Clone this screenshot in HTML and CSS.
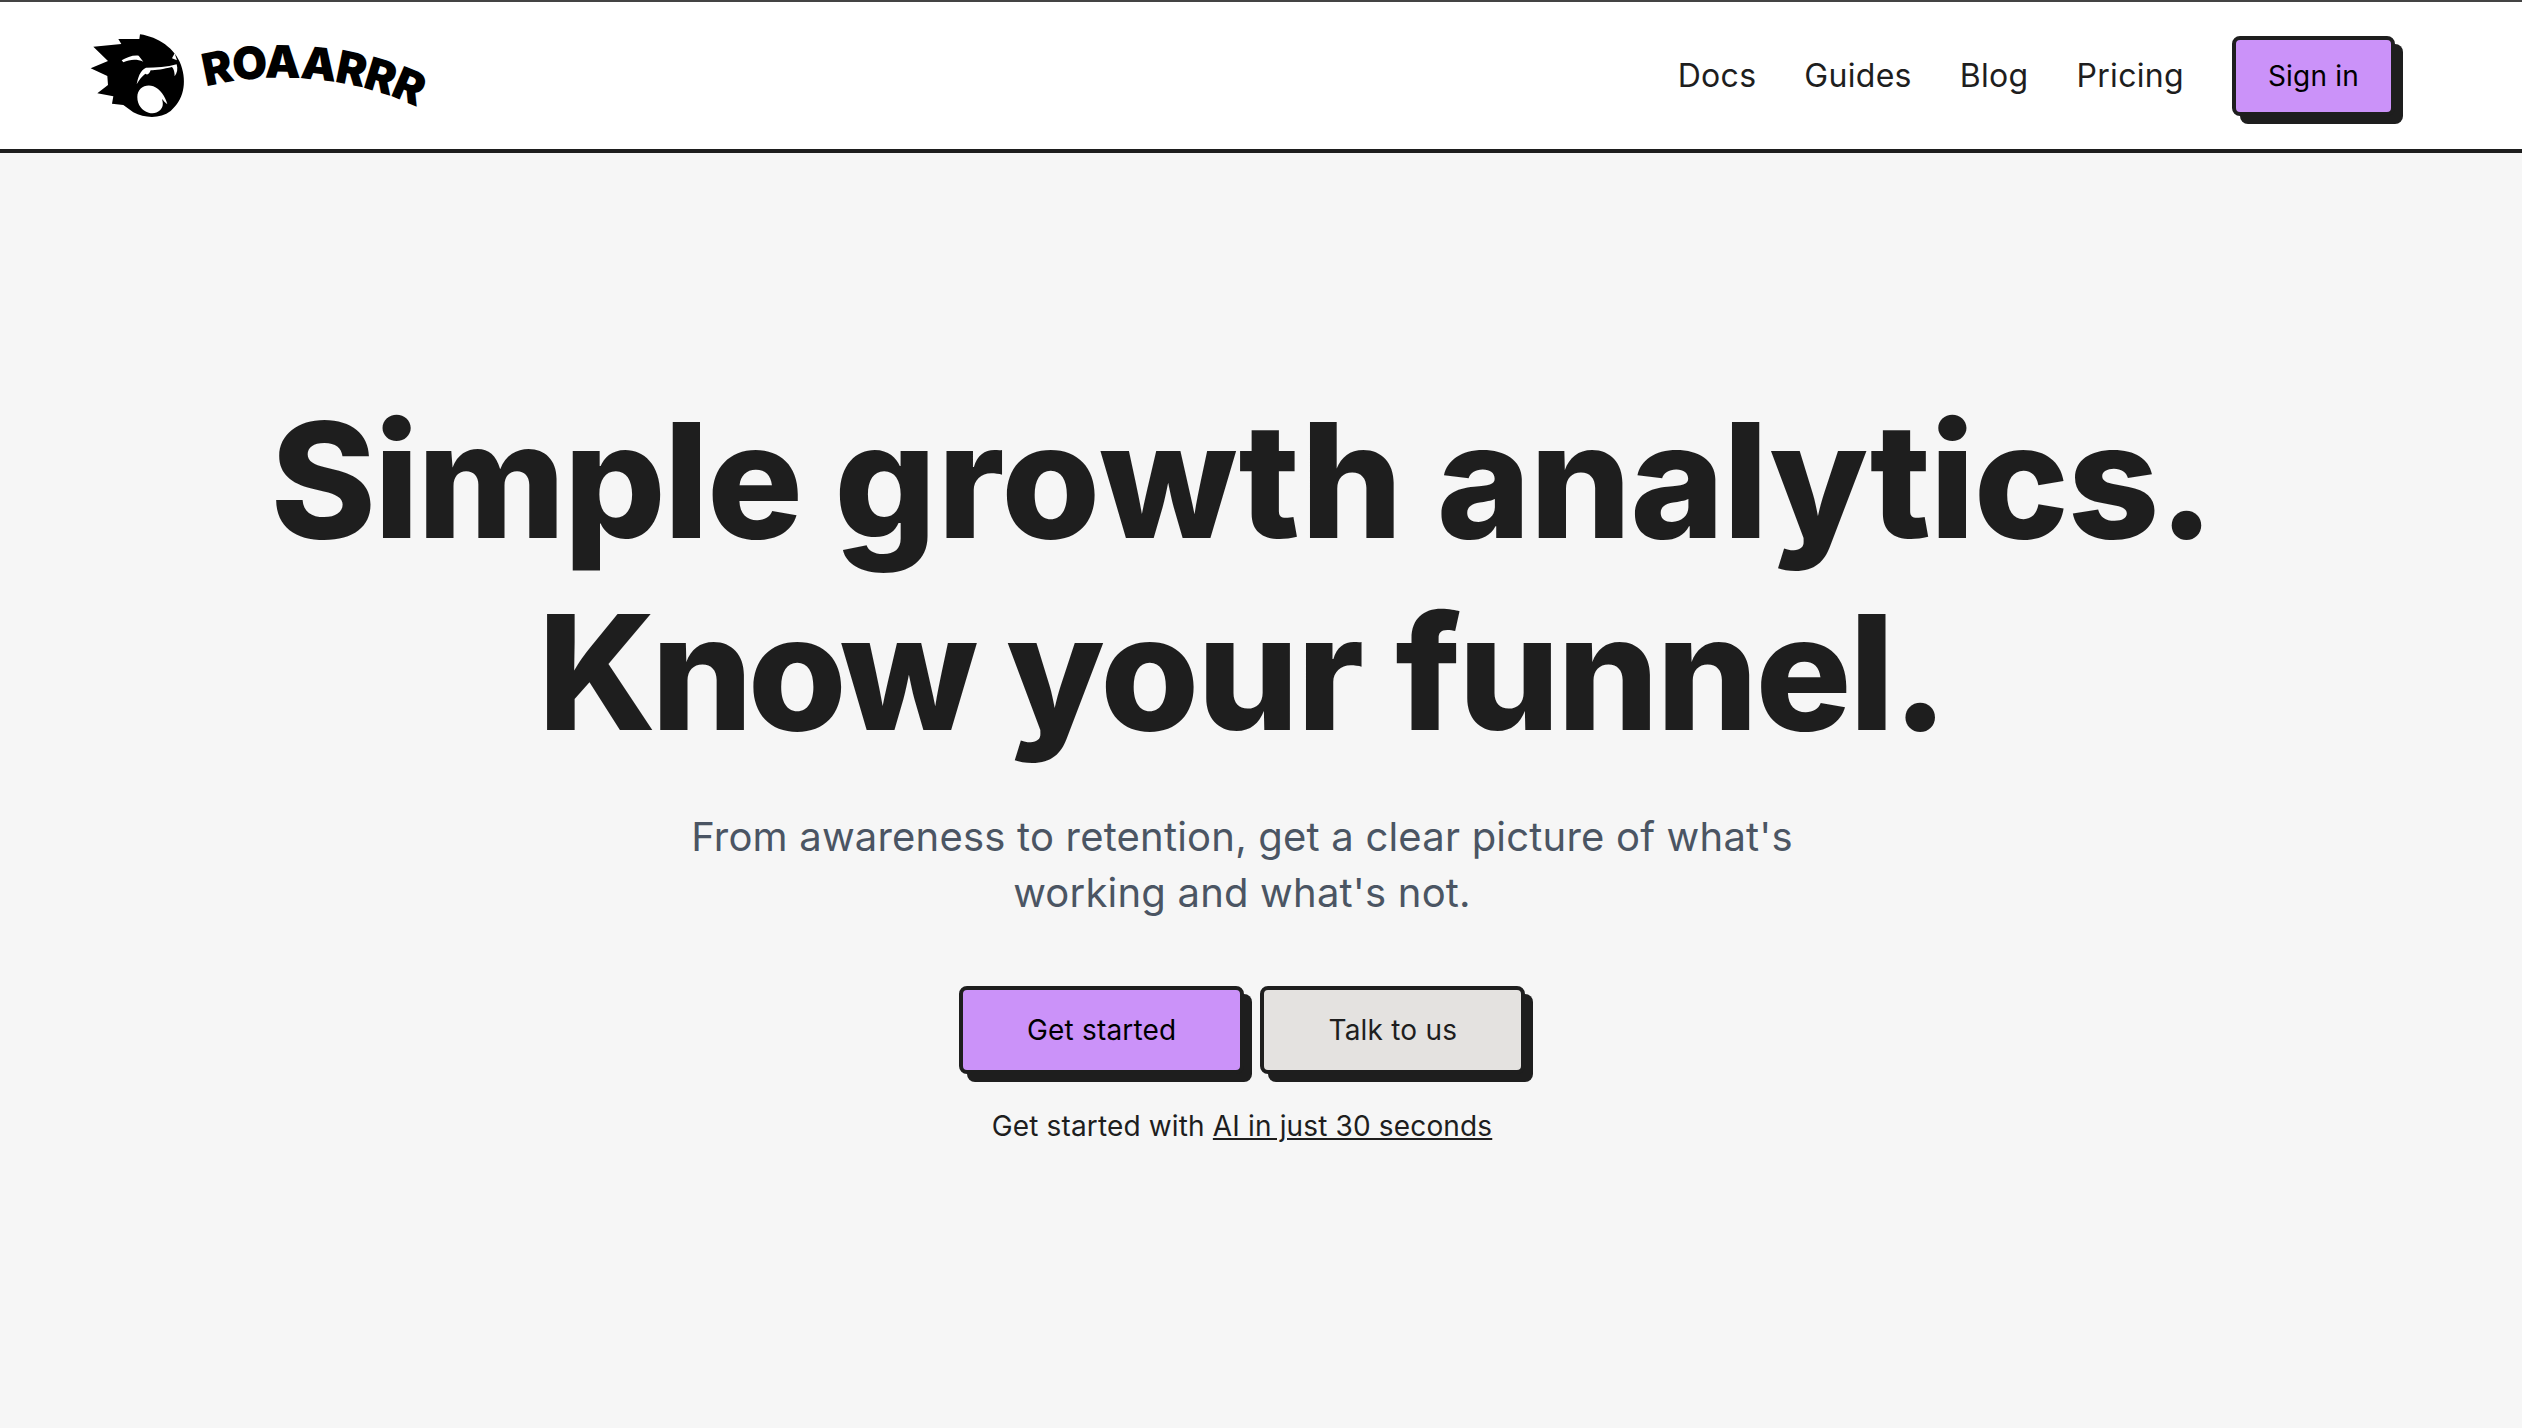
FILE: index.html
```html
<!DOCTYPE html>
<html lang="en">
<head>
<meta charset="utf-8">
<title>Roaarrr</title>
<link rel="stylesheet" href="styles.css">
</head>
<body>
<header class="nav">
  <a class="logo" href="#" aria-label="Roaarrr">
    <svg class="logo-svg" viewBox="0 0 350 100" width="350" height="100">
      <g transform="scale(0.3333)">
        <path class="ink" d="M180 28 C235 36 285 70 303 120 C322 175 310 225 272 258 C240 282 195 280 160 262 L130 240 L96 236 L100 214 L52 205 L84 180 L82 153 L32 130 L84 108 L40 65 L124 57 L115 42 L178 42 Z"/>
        <path class="hole" d="M125 106 C140 97 158 90 176 92 L190 110 C172 102 150 102 130 112 Z"/>
        <path class="hole" d="M276 100 L284 85 L291 106 Z"/>
        <path class="hole" d="M170 178 C174 158 180 136 198 128 C228 128 262 126 290 118 C294 132 292 144 284 154 C284 142 282 132 276 126 C252 132 226 136 212 136 C208 146 203 152 196 146 C186 154 176 166 170 178 Z"/>
        <path class="hole" d="M172 216 C172 190 196 176 220 184 C240 192 256 214 262 238 C254 232 250 226 246 222 C250 236 250 246 240 256 C230 266 216 266 206 263 C186 257 172 240 172 216 Z"/>
      </g>
      <defs><path id="arc" d="M126 62 C180 47 270 48 340 84"/></defs>
      <text class="wordmark"><textPath href="#arc" textLength="216" lengthAdjust="spacing">ROAARRR</textPath></text>
    </svg>
  </a>
  <nav class="links">
    <a href="#">Docs</a>
    <a href="#">Guides</a>
    <a href="#">Blog</a>
    <a href="#">Pricing</a>
    <a class="btn btn-purple btn-small" href="#">Sign in</a>
  </nav>
</header>
<main class="hero">
  <h1>Simple <span class="word-wide">growth</span> <span class="word-loose">analytics.</span><br><span class="word-tight">Know</span> your <span class="word-narrow">funnel.</span></h1>
  <p class="sub">From awareness to retention, get a clear picture of what's<br>working and what's not.</p>
  <div class="actions">
    <a class="btn btn-purple" href="#">Get started</a>
    <a class="btn btn-gray" href="#">Talk to us</a>
  </div>
  <p class="note">Get started with <a href="#">AI in just 30 seconds</a></p>
</main>
</body>
</html>
```
FILE: styles.css
```css
* { box-sizing: border-box; }
html, body { margin: 0; height: 100%; }
body {
  background: #f6f6f6;
  color: #1e1e1e;
  font-family: Inter, "Noto Sans", sans-serif;
  overflow: hidden;
}
a { color: inherit; text-decoration: none; }
.nav {
  display: flex;
  align-items: center;
  justify-content: space-between;
  height: 153px;
  padding: 0 127px 0 80px;
  background: #fff;
  border-top: 2px solid #444;
  border-bottom: 4px solid #1e1e1e;
}
.logo { display: block; height: 100px; margin-top: -2px; }
.logo-svg { display: block; overflow: visible; }
.ink { fill: #000; }
.hole { fill: #fff; }
.wordmark { font: 900 45px Inter, sans-serif; fill: #000; }
.links {
  display: flex;
  align-items: center;
  gap: 48px;
  font-size: 32px;
  line-height: 48px;
  letter-spacing: 0.3px;
}
.btn {
  display: block;
  font-size: 28px;
  line-height: 40px;
  padding: 20px 64px;
  border: 4px solid #1e1e1e;
  border-radius: 8px;
  box-shadow: 8px 8px 0 #1e1e1e;
  letter-spacing: 0.2px;
}
.btn-small { padding: 16px 32px; color: #000; }
.btn-purple { background: #cb92f9; color: #000; }
.btn-gray { background: #e4e2e0; }
.hero { display: flex; flex-direction: column; align-items: center; padding-right: 38px; }
h1 {
  margin: 0;
  padding-top: 231px;
  text-align: center;
  font-size: 160px;
  line-height: 192px;
  font-weight: 800;
  letter-spacing: -2px;
}
.word-wide { letter-spacing: 1px; }
.word-loose { letter-spacing: -1.2px; }
.word-tight { letter-spacing: -5px; }
.word-narrow { letter-spacing: -2.5px; }
.sub {
  margin: 41px 0 0;
  text-align: center;
  font-size: 40px;
  line-height: 56px;
  color: #4b5563;
  letter-spacing: 0.2px;
}
.actions { display: flex; gap: 16px; margin-top: 65px; }
.note { margin: 32px 0 0; font-size: 28px; line-height: 40px; letter-spacing: 0.15px; }
.note a { text-decoration: underline; }
```
